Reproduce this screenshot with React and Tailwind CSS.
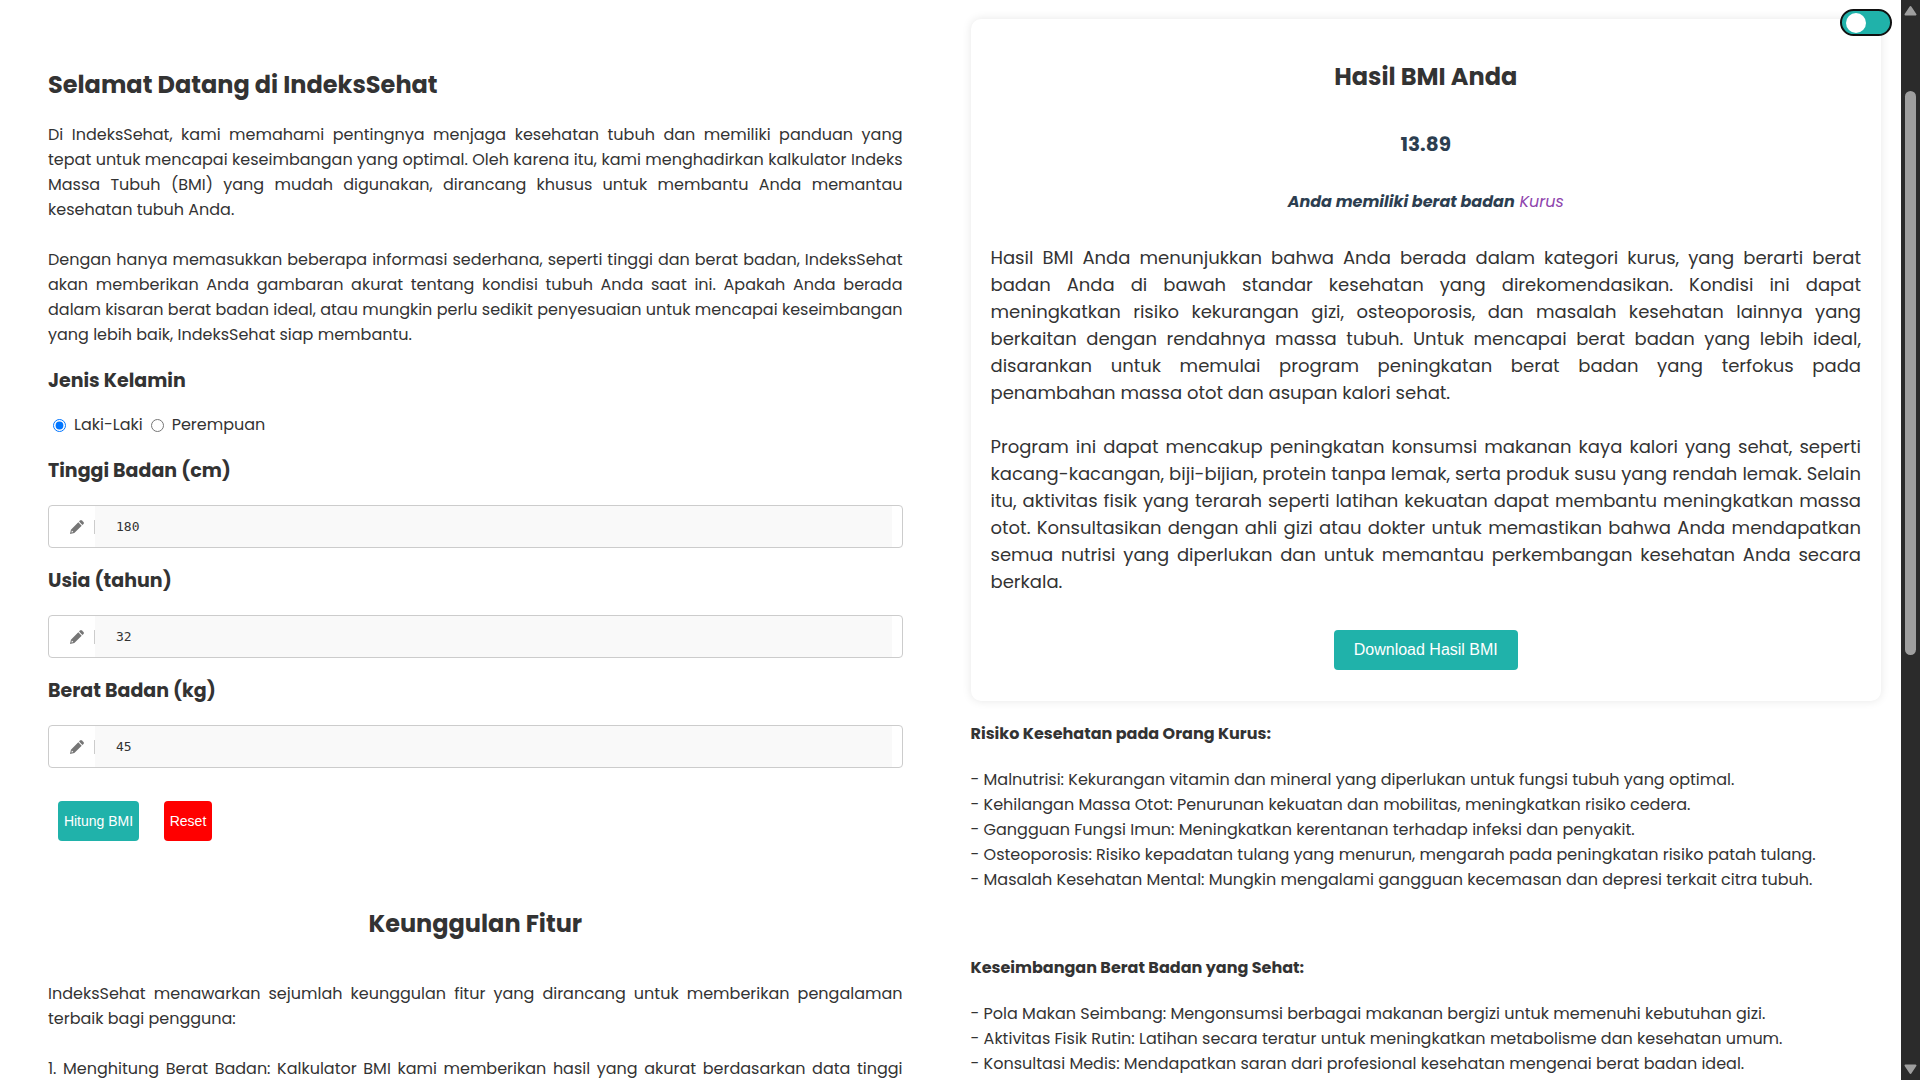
import { useState } from "react";

const BODY = "text-justify text-[16px] leading-[25px]";

function PencilIcon() {
  return (
    <svg width="14" height="14" viewBox="0 0 14 14" fill="currentColor" fillRule="evenodd" aria-hidden="true">
      <path d="M8.3 2.3 11.7 5.7 4.3 13.1 0 14 0.9 9.7ZM1.9 10.6 1.4 12.6 3.4 12.1Z" />
      <path d="M9 1.6 10.1 0.5Q11 -0.3 11.9 0.5L13.5 2.1Q14.3 3 13.5 3.9L12.4 5Z" />
    </svg>
  );
}

function NumberField({ id, label, value, onChange }) {
  return (
    <div>
      <label htmlFor={id} className="block pt-[18px] pb-[19px] text-[19px] leading-[30px] font-bold">
        {label}
      </label>
      <div className="flex h-[43px] items-stretch rounded border border-[#ccc] pr-2.5">
        <span className="flex w-[46px] items-center justify-between pl-[21px] text-[#757575]">
          <PencilIcon />
          <span className="h-3.5 w-px bg-[#ccc]" />
        </span>
        <input
          id={id}
          inputMode="numeric"
          value={value}
          onChange={(e) => onChange(e.target.value)}
          className="min-w-0 flex-1 bg-[#f9f9f9] px-[21px] font-['DejaVu_Sans_Mono',monospace] text-[13px] outline-none"
        />
      </div>
    </div>
  );
}

function Calculator() {
  const [height, setHeight] = useState("180");
  const [age, setAge] = useState("32");
  const [weight, setWeight] = useState("45");
  const [gender, setGender] = useState("l");
  const reset = () => {
    setHeight("");
    setAge("");
    setWeight("");
  };

  return (
    <form onSubmit={(e) => e.preventDefault()}>
      <fieldset>
        <legend className="pt-[19px] text-[19px] leading-[30px] font-bold">Jenis Kelamin</legend>
        <div className="mt-4 flex items-center pl-[5px] text-[16px] leading-[26px]">
          <input
            id="laki"
            type="radio"
            name="gender"
            checked={gender === "l"}
            onChange={() => setGender("l")}
            className="mr-2 size-[13px]"
          />
          <label htmlFor="laki" className="mr-2">Laki-Laki</label>
          <input
            id="perempuan"
            type="radio"
            name="gender"
            checked={gender === "p"}
            onChange={() => setGender("p")}
            className="mr-2 size-[13px]"
          />
          <label htmlFor="perempuan">Perempuan</label>
        </div>
      </fieldset>
      <NumberField id="tinggi" label="Tinggi Badan (cm)" value={height} onChange={setHeight} />
      <NumberField id="usia" label="Usia (tahun)" value={age} onChange={setAge} />
      <NumberField id="berat" label="Berat Badan (kg)" value={weight} onChange={setWeight} />
      <div className="mt-[33px] ml-2.5 flex gap-[25px] font-['Liberation_Sans',Arial,sans-serif] text-[14px] text-white">
        <button type="submit" className="h-10 w-[81px] rounded bg-[#20b2aa] whitespace-nowrap">Hitung BMI</button>
        <button type="button" onClick={reset} className="h-10 w-12 rounded bg-[#ff0000]">Reset</button>
      </div>
    </form>
  );
}

function InfoList({ title, items }) {
  return (
    <section>
      <h3 className="text-[16px] leading-[25px] font-bold">{title}</h3>
      <ul className="mt-[21px] text-[16px] leading-[25px]">
        {items.map((item) => (
          <li key={item}>- {item}</li>
        ))}
      </ul>
    </section>
  );
}

function ResultCard() {
  return (
    <section className="flex flex-col items-center rounded-[10px] bg-white px-5 pt-10 pb-[31px] shadow-[0_0_10px_rgba(0,0,0,0.1)]">
      <h2 className="text-[24px] leading-9 font-bold">Hasil BMI Anda</h2>
      <p className="mt-[34px] text-[20px] leading-[30px] font-bold text-[#2c3e50]">13.89</p>
      <p className="mt-[29px] text-[16px] leading-7 text-[#8e44ad] italic">
        <strong className="text-[#2c3e50]">Anda memiliki berat badan</strong> Kurus
      </p>
      <p className="mt-7 text-justify text-[18px] leading-[27px]">
        Hasil BMI Anda menunjukkan bahwa Anda berada dalam kategori kurus, yang berarti berat badan Anda di bawah
        standar kesehatan yang direkomendasikan. Kondisi ini dapat meningkatkan risiko kekurangan gizi, osteoporosis,
        dan masalah kesehatan lainnya yang berkaitan dengan rendahnya massa tubuh. Untuk mencapai berat badan yang
        lebih ideal, disarankan untuk memulai program peningkatan berat badan yang terfokus pada penambahan massa otot
        dan asupan kalori sehat.
      </p>
      <p className="mt-[27px] text-justify text-[18px] leading-[27px]">
        Program ini dapat mencakup peningkatan konsumsi makanan kaya kalori yang sehat, seperti kacang-kacangan,
        biji-bijian, protein tanpa lemak, serta produk susu yang rendah lemak. Selain itu, aktivitas fisik yang
        terarah seperti latihan kekuatan dapat membantu meningkatkan massa otot. Konsultasikan dengan ahli gizi atau
        dokter untuk memastikan bahwa Anda mendapatkan semua nutrisi yang diperlukan dan untuk memantau perkembangan
        kesehatan Anda secara berkala.
      </p>
      <button className="mt-[35px] h-10 rounded bg-[#20b2aa] px-5 font-['Liberation_Sans',Arial,sans-serif] text-[16px] text-white">
        Download Hasil BMI
      </button>
    </section>
  );
}

function ThemeSwitch() {
  const [dark, setDark] = useState(false);
  return (
    <button
      role="switch"
      aria-checked={dark}
      aria-label="Mode gelap"
      onClick={() => setDark(!dark)}
      className="absolute top-[9px] right-[9px] flex h-[27px] w-[52px] items-center rounded-full border-2 border-[#111] bg-[#20b2aa] px-1"
    >
      <span className="size-5 rounded-full bg-white" />
    </button>
  );
}

function Scrollbar() {
  return (
    <div aria-hidden="true" className="flex w-[19px] shrink-0 flex-col items-center bg-[#2b2b2b] py-[5px] text-[#9f9f9f]">
      <svg width="13" height="11" viewBox="0 0 13 11" fill="currentColor" stroke="currentColor" strokeWidth="2" strokeLinejoin="round">
        <path d="M6.5 2 11.5 9.5H1.5Z" />
      </svg>
      <div className="flex w-full flex-1 flex-col items-center pt-[75px]">
        <div className="h-[58%] w-[11px] rounded-full bg-[#9f9f9f]" />
      </div>
      <svg width="13" height="11" viewBox="0 0 13 11" fill="currentColor" stroke="currentColor" strokeWidth="2" strokeLinejoin="round">
        <path d="M6.5 9 11.5 1.5H1.5Z" />
      </svg>
    </div>
  );
}

export default function App() {
  return (
    <div className="flex h-screen overflow-hidden bg-white font-[Poppins,Inter,sans-serif] text-[#333]">
      <div className="relative grid flex-1 grid-cols-2 overflow-hidden">
        <main className="px-12 pt-[67px]">
          <h1 className="text-[24px] leading-9 font-bold">Selamat Datang di IndeksSehat</h1>
          <p className={`mt-[19px] ${BODY}`}>
            Di IndeksSehat, kami memahami pentingnya menjaga kesehatan tubuh dan memiliki panduan yang tepat untuk
            mencapai keseimbangan yang optimal. Oleh karena itu, kami menghadirkan kalkulator Indeks Massa Tubuh (BMI)
            yang mudah digunakan, dirancang khusus untuk membantu Anda memantau kesehatan tubuh Anda.
          </p>
          <p className={`mt-[25px] ${BODY}`}>
            Dengan hanya memasukkan beberapa informasi sederhana, seperti tinggi dan berat badan, IndeksSehat akan
            memberikan Anda gambaran akurat tentang kondisi tubuh Anda saat ini. Apakah Anda berada dalam kisaran
            berat badan ideal, atau mungkin perlu sedikit penyesuaian untuk mencapai keseimbangan yang lebih baik,
            IndeksSehat siap membantu.
          </p>
          <Calculator />
          <h2 className="mt-[65px] text-center text-[24px] leading-9 font-bold">Keunggulan Fitur</h2>
          <p className={`mt-[39px] ${BODY}`}>
            IndeksSehat menawarkan sejumlah keunggulan fitur yang dirancang untuk memberikan pengalaman terbaik bagi
            pengguna:
          </p>
          <p className={`mt-[25px] [text-align-last:justify] ${BODY}`}>
            1. Menghitung Berat Badan: Kalkulator BMI kami memberikan hasil yang akurat berdasarkan data tinggi
          </p>
        </main>
        <aside className="flex flex-col px-5 pt-[19px]">
          <ResultCard />
          <div className="mt-5 flex flex-col gap-[63px]">
            <InfoList
              title="Risiko Kesehatan pada Orang Kurus:"
              items={[
                "Malnutrisi: Kekurangan vitamin dan mineral yang diperlukan untuk fungsi tubuh yang optimal.",
                "Kehilangan Massa Otot: Penurunan kekuatan dan mobilitas, meningkatkan risiko cedera.",
                "Gangguan Fungsi Imun: Meningkatkan kerentanan terhadap infeksi dan penyakit.",
                "Osteoporosis: Risiko kepadatan tulang yang menurun, mengarah pada peningkatan risiko patah tulang.",
                "Masalah Kesehatan Mental: Mungkin mengalami gangguan kecemasan dan depresi terkait citra tubuh.",
              ]}
            />
            <InfoList
              title="Keseimbangan Berat Badan yang Sehat:"
              items={[
                "Pola Makan Seimbang: Mengonsumsi berbagai makanan bergizi untuk memenuhi kebutuhan gizi.",
                "Aktivitas Fisik Rutin: Latihan secara teratur untuk meningkatkan metabolisme dan kesehatan umum.",
                "Konsultasi Medis: Mendapatkan saran dari profesional kesehatan mengenai berat badan ideal.",
              ]}
            />
          </div>
        </aside>
        <ThemeSwitch />
      </div>
      <Scrollbar />
    </div>
  );
}
